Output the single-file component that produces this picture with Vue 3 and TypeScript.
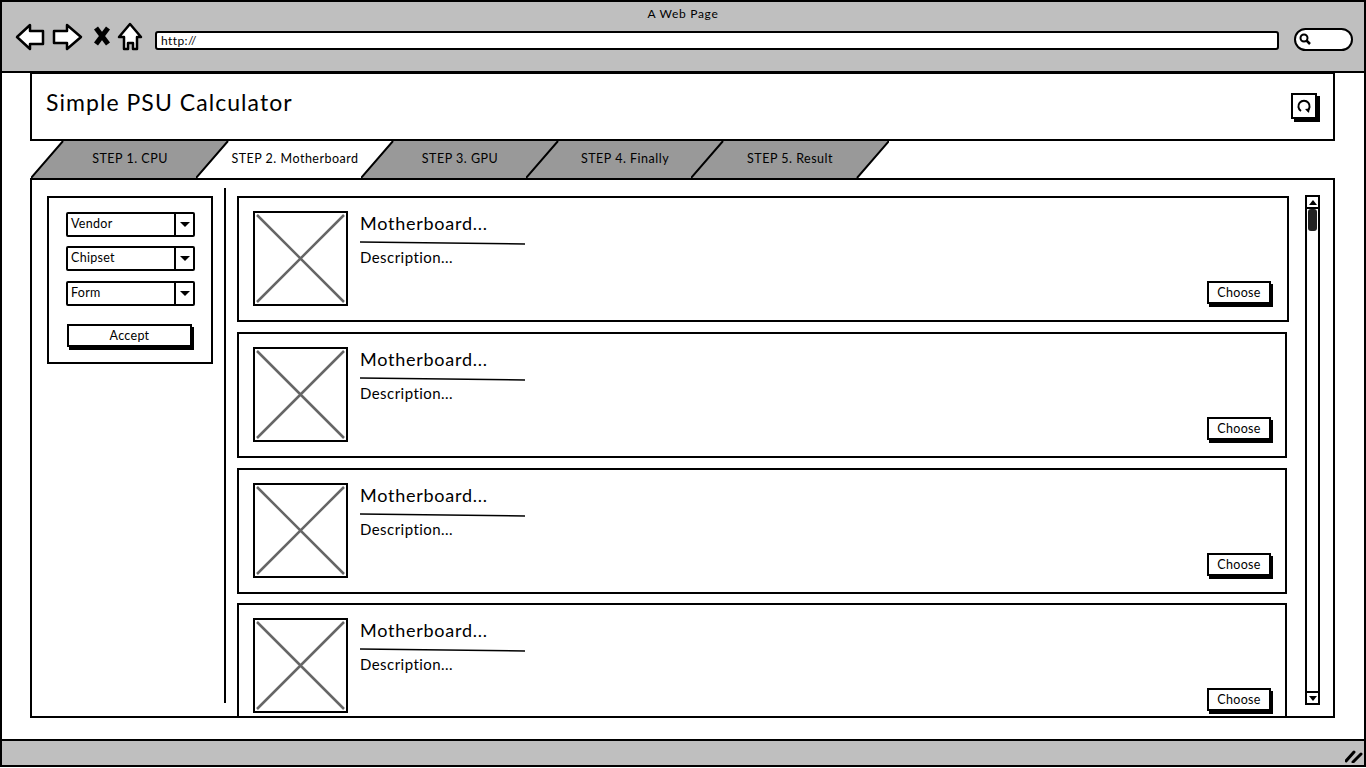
<script setup lang="ts">
interface Tab {
  label: string;
  active?: boolean;
}

const tabs: Tab[] = [
  { label: 'STEP 1. CPU' },
  { label: 'STEP 2. Motherboard', active: true },
  { label: 'STEP 3. GPU' },
  { label: 'STEP 4. Finally' },
  { label: 'STEP 5. Result' }
];

const filters = ['Vendor', 'Chipset', 'Form'];
const boards = [1, 2, 3, 4];
</script>

<template>
  <div class="frame">
    <header class="chrome">
      <div class="chrome-title">A Web Page</div>
      <div class="chrome-row">
        <svg class="nav-icons" width="130" height="30" viewBox="15 22 130 30">
          <path class="nav" d="M17 37 L30 25 L30 31 L43 31 L43 44 L30 44 L30 49 Z" />
          <path class="nav" d="M54 31 L67 31 L67 25 L81 37 L67 49 L67 43 L54 43 Z" />
          <path class="stop" d="M96 28 L108 44 M108 28 L96 44" />
          <path class="nav" d="M130 24 L119 37 L124 37 L124 49 L128 49 L128 43 L133 43 L133 49 L137 49 L137 37 L141 37 Z" />
        </svg>
        <div class="url">http://</div>
        <div class="search">
          <svg width="14" height="14" viewBox="0 0 14 14">
            <circle cx="6" cy="6" r="3.5" fill="none" stroke="#000" stroke-width="2" />
            <path d="M8.5 8.5 L12 12" stroke="#000" stroke-width="2.5" />
          </svg>
        </div>
      </div>
    </header>

    <main class="viewport">
      <section class="page-head">
        <h1>Simple PSU Calculator</h1>
        <button class="refresh" type="button" aria-label="Refresh">
          <svg width="18" height="18" viewBox="0 0 18 18">
            <path d="M6 14 A5.6 5.6 0 1 1 12 14" fill="none" stroke="#000" stroke-width="2" />
            <path d="M10 12 L14.5 11.5 L14 16 Z" fill="#000" />
          </svg>
        </button>
      </section>

      <nav class="tabs">
        <div v-for="tab in tabs" :key="tab.label" class="tab" :class="{ active: tab.active }">
          <svg class="tab-shape" width="198" height="37" viewBox="0 0 198 37">
            <polygon class="tab-fill" points="0,37 32,0 198,0 166,37" />
            <path class="tab-edge" d="M0 37 L32 0 M198 0 L166 37" />
          </svg>
          <span class="tab-label">{{ tab.label }}</span>
        </div>
      </nav>

      <section class="panel">
        <aside class="filter">
          <div v-for="name in filters" :key="name" class="select">
            <span class="select-text">{{ name }}</span>
            <span class="select-btn"><i class="caret" /></span>
          </div>
          <button class="btn accept" type="button">Accept</button>
        </aside>

        <div class="divider" />

        <div class="list">
          <article v-for="b in boards" :key="b" class="card">
            <svg class="thumb" width="95" height="95" viewBox="0 0 95 95">
              <rect x="1" y="1" width="93" height="93" fill="#fff" stroke="#000" stroke-width="2" />
              <path d="M4 4 L91 91 M91 4 L4 91" stroke="#666" stroke-width="2.5" />
            </svg>
            <div class="info">
              <div class="info-title">Motherboard...</div>
              <svg class="rule" width="165" height="4" viewBox="0 0 165 4">
                <path d="M0 1 L165 3" stroke="#000" stroke-width="1.5" />
              </svg>
              <div class="info-desc">Description...</div>
              <button class="btn choose" type="button">Choose</button>
            </div>
          </article>
        </div>

        <div class="scrollbar">
          <div class="scroll-btn"><i class="tri up" /></div>
          <div class="scroll-track"><div class="scroll-thumb" /></div>
          <div class="scroll-btn bottom"><i class="tri" /></div>
        </div>
      </section>
    </main>

    <footer class="status">
      <svg width="18" height="14" viewBox="0 0 18 14">
        <path d="M1 12 L9 3 M8 13 L16 5" stroke="#000" stroke-width="3" stroke-linecap="round" />
      </svg>
    </footer>
  </div>
</template>

<style>
html,
body {
  margin: 0;
  background: #fff;
}
</style>

<style scoped>
.frame {
  width: 1366px;
  height: 767px;
  box-sizing: border-box;
  border: 2px solid #000;
  display: flex;
  flex-direction: column;
  overflow: hidden;
  background: #fff;
  color: #000;
  font-family: Lato, "Open Sans", sans-serif;
}

.chrome {
  height: 71px;
  flex: none;
  box-sizing: border-box;
  background: #bfbfbf;
  border-bottom: 2px solid #000;
}

.chrome-title {
  height: 22px;
  line-height: 23px;
  text-align: center;
  font-size: 12px;
  letter-spacing: 0.7px;
}

.chrome-row {
  display: flex;
  align-items: center;
  padding-left: 13px;
  margin-top: -2px;
  height: 30px;
}

.nav {
  fill: #fff;
  stroke: #000;
  stroke-width: 2.5;
  stroke-linejoin: round;
}

.stop {
  fill: none;
  stroke: #000;
  stroke-width: 5;
}

.url {
  width: 1124px;
  height: 19px;
  margin: 6px 0 0 10px;
  box-sizing: border-box;
  background: #fff;
  border: 2px solid #000;
  border-radius: 3px;
  padding-left: 4px;
  font-size: 12px;
  line-height: 15px;
  letter-spacing: 0.4px;
}

.search {
  width: 59px;
  height: 23px;
  margin: 4px 0 0 15px;
  box-sizing: border-box;
  background: #fff;
  border: 2px solid #000;
  border-radius: 12px;
  display: flex;
  align-items: center;
  padding-left: 2px;
}

.viewport {
  flex: 1;
  min-height: 0;
  display: flex;
  flex-direction: column;
  padding-left: 28px;
}

.page-head {
  width: 1305px;
  height: 68px;
  box-sizing: border-box;
  flex: none;
  border: 2px solid #000;
  border-top-width: 1px;
  display: flex;
  align-items: center;
  justify-content: space-between;
  padding: 0 16px 9px 14px;
}

.page-head h1 {
  margin: 0;
  font-size: 23px;
  font-weight: 400;
  letter-spacing: 1.05px;
}

.refresh {
  width: 26px;
  height: 26px;
  padding: 0;
  margin-top: 7px;
  box-sizing: border-box;
  background: #fff;
  border: 2px solid #000;
  box-shadow: 3px 3px 0 #000;
  display: flex;
  align-items: center;
  justify-content: center;
}

.tabs {
  height: 37px;
  flex: none;
  display: flex;
  margin-left: 1px;
}

.tab {
  position: relative;
  width: 198px;
  height: 37px;
  margin-right: -33px;
  display: flex;
  align-items: center;
  justify-content: center;
  box-sizing: border-box;
  padding-bottom: 2px;
}

.tab-shape {
  position: absolute;
  inset: 0;
}

.tab-fill {
  fill: #999;
}

.tab.active .tab-fill {
  fill: #fff;
}

.tab-edge {
  stroke: #000;
  stroke-width: 2;
}

.tab-label {
  position: relative;
  font-size: 12.5px;
  letter-spacing: 0.5px;
}

.panel {
  width: 1305px;
  height: 540px;
  box-sizing: border-box;
  flex: none;
  border: 2px solid #000;
  display: flex;
  overflow: hidden;
  padding-left: 15px;
}

.filter {
  width: 166px;
  height: 168px;
  flex: none;
  margin-top: 16px;
  box-sizing: border-box;
  border: 2px solid #000;
  padding: 14px 17px 0;
}

.select {
  width: 129px;
  height: 25px;
  box-sizing: border-box;
  border: 2px solid #000;
  border-radius: 2px;
  margin-bottom: 9.4px;
  display: flex;
  font-size: 12.5px;
  line-height: 19px;
}

.select-text {
  flex: 1;
  padding-left: 3px;
  letter-spacing: 0.3px;
}

.select-btn {
  width: 17px;
  border-left: 2px solid #000;
  display: flex;
  align-items: center;
  justify-content: center;
}

.caret {
  width: 0;
  height: 0;
  border-left: 5px solid transparent;
  border-right: 5px solid transparent;
  border-top: 5px solid #000;
}

.btn {
  box-sizing: border-box;
  padding: 0;
  background: #fff;
  border: 2px solid #000;
  box-shadow: 2px 3px 0 #000;
  color: #000;
  font-family: inherit;
  font-size: 12.5px;
  letter-spacing: 0.3px;
  line-height: 17px;
}

.accept {
  display: block;
  width: 125px;
  height: 23px;
  margin: 18px 0 0 1px;
}

.divider {
  width: 2px;
  flex: none;
  margin: 8px 11px 13px 11px;
  background: #000;
}

.list {
  width: 1050px;
  flex: none;
  padding-top: 16px;
  display: flex;
  flex-direction: column;
  gap: 10px;
}

.card {
  height: 126px;
  flex: none;
  box-sizing: border-box;
  border: 2px solid #000;
  padding: 13px 14px 14px;
  display: flex;
  background: #fff;
}

.card:first-child {
  margin-right: -2px;
  padding-right: 16px;
}

.card:last-child {
  margin-top: -1px;
}

.thumb {
  flex: none;
}

.info {
  flex: 1;
  margin-left: 12px;
  display: flex;
  flex-direction: column;
}

.info-title {
  font-size: 18px;
  line-height: 24px;
  letter-spacing: 0.75px;
}

.rule {
  display: block;
  margin-top: 6px;
}

.info-desc {
  margin-top: 2px;
  font-size: 15px;
  line-height: 20px;
  letter-spacing: 0.45px;
}

.choose {
  width: 64px;
  height: 23px;
  margin-top: auto;
  margin-bottom: 2px;
  align-self: flex-end;
}

.scrollbar {
  width: 15px;
  height: 510px;
  flex: none;
  margin: 15px 0 0 18px;
  box-sizing: border-box;
  border: 2px solid #000;
  display: flex;
  flex-direction: column;
}

.scroll-btn {
  height: 10px;
  flex: none;
  border-bottom: 2px solid #000;
  display: flex;
  align-items: center;
  justify-content: center;
}

.scroll-btn.bottom {
  border-bottom: 0;
  border-top: 2px solid #000;
}

.tri {
  width: 0;
  height: 0;
  border-left: 4px solid transparent;
  border-right: 4px solid transparent;
  border-top: 5px solid #000;
}

.tri.up {
  border-top: 0;
  border-bottom: 5px solid #000;
}

.scroll-track {
  flex: 1;
  padding: 0 1px;
}

.scroll-thumb {
  height: 22px;
  background: #222;
  border-radius: 3px;
}

.status {
  margin-top: auto;
  height: 26px;
  flex: none;
  box-sizing: border-box;
  background: #bfbfbf;
  border-top: 2px solid #000;
  display: flex;
  align-items: flex-end;
  justify-content: flex-end;
  padding: 0 1px 2px 0;
}
</style>
